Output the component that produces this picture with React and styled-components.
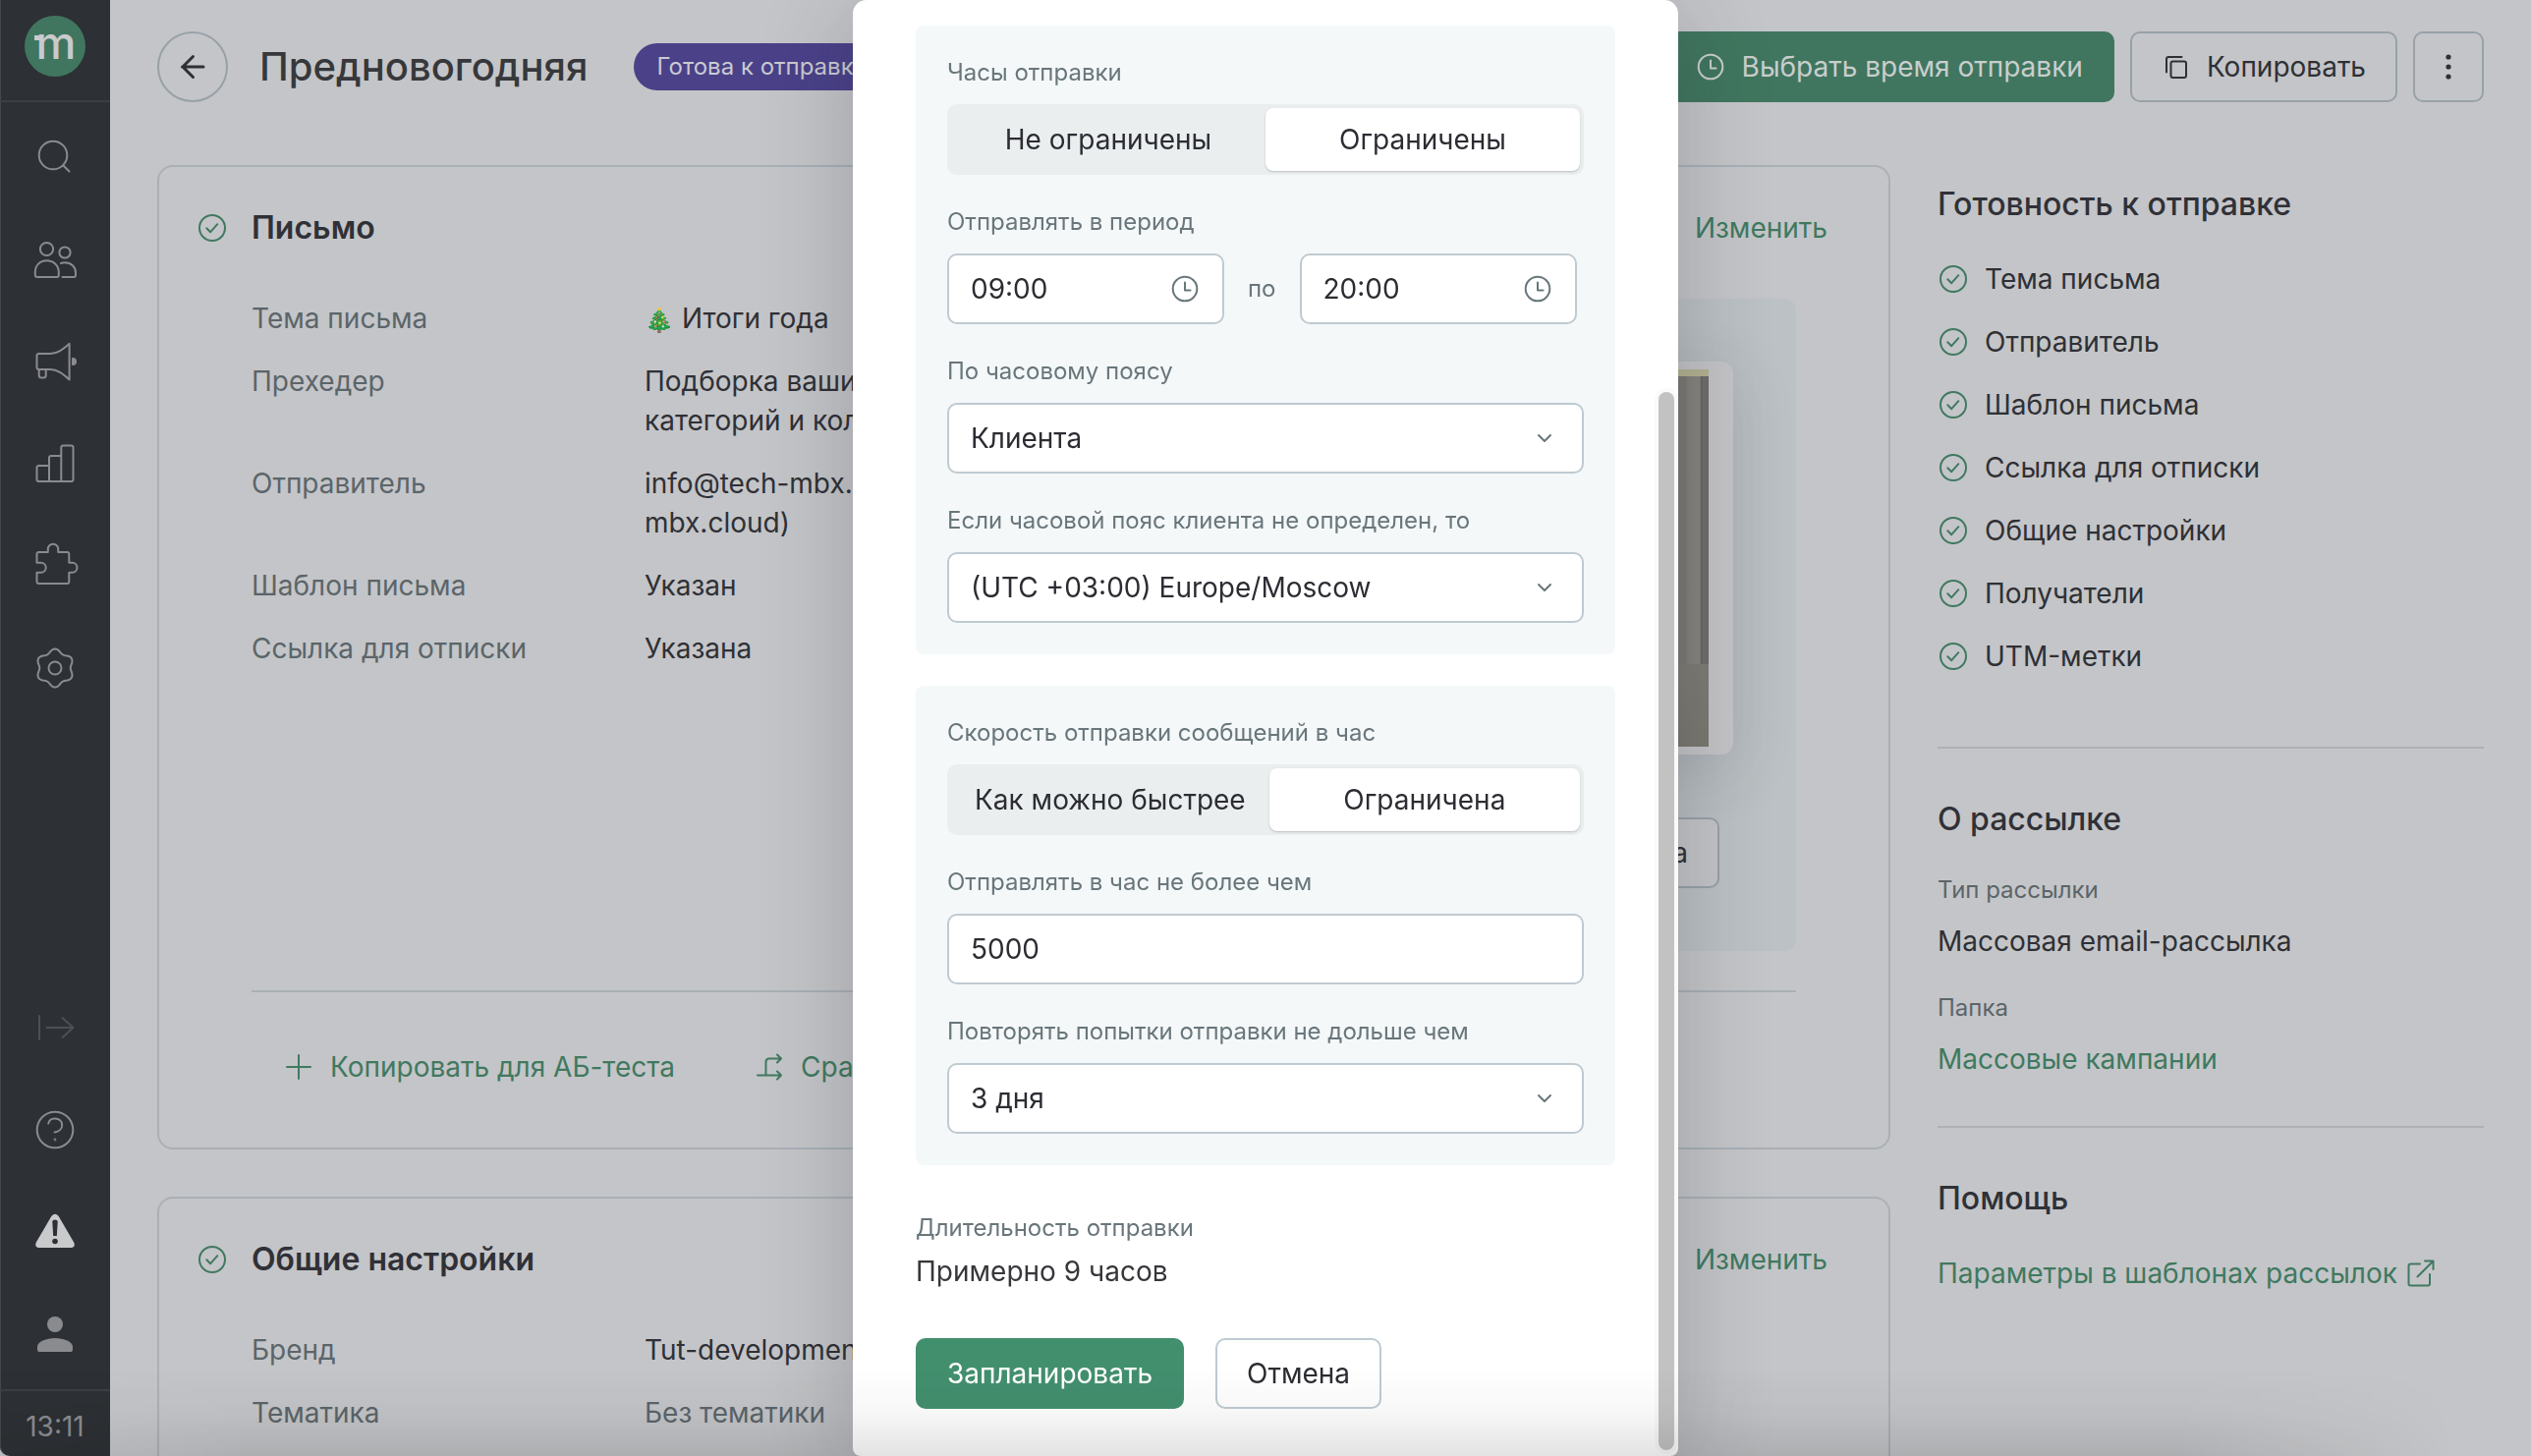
import React, { useState } from "react";
import styled, { createGlobalStyle } from "styled-components";

const c = {
  page: "#c4c5c8",
  ink: "#2f3035",
  muted: "#5b656a",
  green: "#407960",
  greenFill: "#40765f",
  line: "#a9b0b6",
  lineSoft: "#adb0b4",
  lineStrong: "#98a1a8",
  side: "#2d3034",
  sideIcon: "#8a8b8f",
  badge: "#4a4189",
  modalInk: "#2c2d33",
  modalMuted: "#69767b",
  modalLine: "#bfcad1",
  modalGreen: "#428f6e",
  panel: "#f4f8f9",
};

const GlobalStyle = createGlobalStyle`
  *, *::before, *::after { box-sizing: border-box; }
  body {
    margin: 0;
    background: ${c.page};
    color: ${c.ink};
    font-family: Inter, "Noto Sans", "Liberation Sans", sans-serif;
    font-size: 28px;
    line-height: 40px;
  }
  button, input, select { font: inherit; color: inherit; }
  button { cursor: pointer; }
  h1, h2, p, dl, dd, dt, ul { margin: 0; padding: 0; }
  a { text-decoration: none; }
`;

/* ---------- icons ---------- */

const Svg = styled.svg`
  display: block;
  flex: none;
  fill: ${(p) => (p.$solid ? "currentColor" : "none")};
  stroke: ${(p) => (p.$solid ? "none" : "currentColor")};
  stroke-width: ${(p) => p.$weight || 2};
  stroke-linecap: round;
  stroke-linejoin: round;
`;

const Icon = ({ size = 48, solid, weight, children }) => (
  <Svg width={size} height={size} viewBox={`0 0 ${size} ${size}`} aria-hidden="true" $solid={solid} $weight={weight}>
    {children}
  </Svg>
);

const gearPath = Array.from({ length: 72 }, (_, i) => {
  const a = (i / 72) * Math.PI * 2;
  const r = 17.6 + 1.9 * Math.cos(6 * a);
  const x = (24 + r * Math.sin(a)).toFixed(2);
  const y = (24 - r * Math.cos(a)).toFixed(2);
  return `${i ? "L" : "M"}${x} ${y}`;
}).join("") + "Z";

const SearchIcon = () => (
  <Icon><circle cx="22" cy="22" r="14.3" /><path d="M32.5 32.5 38.5 38.5" /></Icon>
);
const UsersIcon = () => (
  <Icon>
    <circle cx="15.5" cy="13.5" r="6.6" />
    <circle cx="34" cy="17" r="5.6" />
    <path d="M15.5 25.3C8.5 25.3 3.8 30.4 3.8 37v3q0 2 2 2h20q2 0 2-2v-3c0-6.600-5-11.700-12.300-11.700Z" />
    <path d="M30 28c1.300-.6 2.600-.8 4-.8 6.500 0 11 4.500 11 10.300V40q0 2-2 2H31.500" />
  </Icon>
);
const MegaphoneIcon = () => (
  <Icon>
    <path d="M7.500 16H19c8 0 14-5.500 19.600-10.200v36.600C33 37.500 27 32 19 32H7.500q-2 0-2-2V18q0-2 2-2Z" />
    <path d="M7.700 32v6q0 2.600 2.600 2.600h1.800q2.600 0 2.600-2.600v-6" />
    <path d="M42 21a3 3 0 0 1 0 6Z" fill="currentColor" />
  </Icon>
);
const ChartIcon = () => (
  <Icon>
    <path d="M18 42H7.500q-2 0-2-2V28q0-2 2-2H18M18 42V18q0-2 2-2h10.300M18 42h12.300M30.300 42V7.600q0-2 2-2h8.200q2 0 2 2V40q0 2-2 2H30.300" />
  </Icon>
);
const PuzzleIcon = () => (
  <Icon>
    <path d="M7.500 10h9.300V6.900a5.200 5.200 0 0 1 10.400 0V10h9.100q2 0 2 2v8.800h3.200a5 5 0 0 1 0 10h-3.200V40q0 2-2 2H7.500q-2 0-2-2v-9.200h4.200a5 5 0 0 0 0-10H5.500V12q0-2 2-2Z" />
  </Icon>
);
const GearIcon = () => (
  <Icon><path d={gearPath} /><circle cx="24" cy="24" r="6.500" /></Icon>
);
const ExpandIcon = () => (
  <Icon><path d="M8 12v24M15.500 24h27M31.500 14l11 10-11 10" /></Icon>
);
const HelpIcon = () => (
  <Icon>
    <circle cx="24" cy="24" r="18.300" />
    <path d="M17.200 17.600c.6-3.200 3.300-5.200 6.700-5.200 4.200 0 7.300 2.700 7.300 6.500 0 4-3.400 7-7.600 7.700" />
    <circle cx="24" cy="34" r=".4" />
  </Icon>
);
const AlertIcon = () => (
  <Icon solid>
    <path fill="#c9cacc" d="M20.300 8.100Q24 3.200 27.700 8.100L43.300 34.800Q45 39.500 40.500 40h-33Q3 39.500 4.700 34.800Z" />
    <path fill={c.side} d="M21.300 13.500q0-2 2.700-2t2.700 2L25.800 28h-3.600Z" />
    <circle fill={c.side} cx="24" cy="33.500" r="2.800" />
  </Icon>
);
const PersonIcon = () => (
  <Icon solid>
    <circle cx="24" cy="14" r="8" />
    <path d="M6 37c0-5.500 9-9 18-9s18 3.500 18 9v3q0 2-2 2H8q-2 0-2-2Z" />
  </Icon>
);
const BackIcon = () => (
  <Icon weight={3}><path d="M13.500 24H35M24.500 13.500 14 24l10.500 10.500" /></Icon>
);
const CheckIcon = () => (
  <Icon size={28}><circle cx="14" cy="14" r="13" /><path d="M8.300 14.300 12.200 18.200 19.300 10.200" /></Icon>
);
const ClockIcon = () => (
  <Icon size={28}><circle cx="14" cy="14" r="12.300" /><path d="M14 7.500V15.500H19.500" /></Icon>
);
const CopyIcon = () => (
  <Icon size={28}>
    <path d="M5 19.500V6q0-2 2-2H20.500" />
    <rect x="9.500" y="8.500" width="15.500" height="16.500" rx="2" />
  </Icon>
);
const DotsIcon = () => (
  <Icon size={28} solid>
    <circle cx="14" cy="4" r="2.600" />
    <circle cx="14" cy="14" r="2.600" />
    <circle cx="14" cy="24" r="2.600" />
  </Icon>
);
const PlusIcon = () => (
  <Icon size={32}><path d="M4 16H28M16 4V28" /></Icon>
);
const CompareIcon = () => (
  <Icon size={32}>
    <path d="M4 24.500H28M12.500 24.500V11q0-3.500 3.500-3.500H28M24 3.500l4 4-4 4M24 20.500l4 4-4 4" />
  </Icon>
);
const ExternalIcon = () => (
  <Icon size={28}>
    <path d="M13 4.500H3.500q-2 0-2 2V24.500q0 2 2 2h17.500q2 0 2-2V15M10.500 17.500 26 2M18 1.500h8.500V10" />
  </Icon>
);
const ChevronIcon = () => (
  <Icon size={16}><path d="M2 5l6 6 6-6" /></Icon>
);
const Logo = () => (
  <svg width="62" height="62" viewBox="0 0 62 62" role="img" aria-label="m">
    <circle cx="31" cy="31" r="31" fill={c.greenFill} />
    <rect x="10" y="20" width="6" height="5" fill="#c9cacc" />
    <text x="32" y="44" textAnchor="middle" fontFamily="Inter, sans-serif" fontSize="46" fontWeight="500" fill="#c9cacc">m</text>
  </svg>
);

/* ---------- page frame ---------- */

const Shell = styled.div`
  display: flex;
  height: 100vh;
  overflow: hidden;
`;

const Sidebar = styled.nav`
  flex: none;
  width: 112px;
  display: flex;
  flex-direction: column;
  background: ${c.side};
  color: ${c.sideIcon};
  border-bottom-left-radius: 10px;
  box-shadow: inset 1px 0 0 #44484b;
`;

const LogoCell = styled.div`
  height: 104px;
  padding-top: 16px;
  display: flex;
  justify-content: center;
  align-items: flex-start;
  border-bottom: 2px solid #3b3e43;
`;

const NavGroup = styled.div`
  display: flex;
  flex-direction: column;
  padding: 4px 0;
  margin-top: ${(p) => (p.$end ? "auto" : "0")};
`;

const NavButton = styled.button`
  height: 104px;
  padding: 0;
  display: grid;
  place-items: center;
  border: 0;
  background: none;
  color: ${(p) => (p.$dim ? "#4d5053" : c.sideIcon)};
`;

const Clock = styled.time`
  height: 68px;
  padding-top: 6px;
  display: flex;
  align-items: center;
  justify-content: center;
  border-top: 2px solid #3b3e43;
`;

const Page = styled.main`
  flex: 1;
  min-width: 0;
  padding: 32px 48px 0;
`;

const Header = styled.header`
  display: flex;
  align-items: center;
  height: 72px;
  margin-bottom: 64px;
`;

const BackButton = styled.button`
  width: 72px;
  height: 72px;
  padding: 0;
  display: grid;
  place-items: center;
  border: 2px solid ${c.lineStrong};
  border-radius: 50%;
  background: none;
`;

const Title = styled.h1`
  margin: 0 46px 0 32px;
  font-size: 40px;
  line-height: 48px;
  font-weight: 500;
  color: #37383b;
`;

const Badge = styled.span`
  height: 48px;
  padding: 0 24px;
  border-radius: 24px;
  background: ${c.badge};
  color: #cacad0;
  font-size: 24px;
  line-height: 48px;
  white-space: nowrap;
`;

const Actions = styled.div`
  display: flex;
  gap: 16px;
  margin-left: auto;
`;

const Button = styled.button`
  display: inline-flex;
  align-items: center;
  justify-content: center;
  gap: ${(p) => (p.$plain ? "16px" : "18px")};
  height: 72px;
  min-width: 72px;
  padding: 0 ${(p) => (p.$square ? "0" : "30px")};
  border: 2px solid ${(p) => (p.$fill || (p.$plain ? "transparent" : p.$line || c.lineStrong))};
  border-radius: 10px;
  background: ${(p) => p.$fill || p.$back || "none"};
  color: ${(p) => p.$ink || c.ink};
  white-space: nowrap;
`;

const Columns = styled.div`
  display: grid;
  grid-template-columns: minmax(0, 1fr) 556px;
  gap: 48px;
  align-items: start;
`;

const Stack = styled.div`
  display: flex;
  flex-direction: column;
  gap: 48px;
`;

/* ---------- cards ---------- */

const Card = styled.section`
  border: 2px solid ${c.line};
  border-radius: 16px;
  padding: 42px 62px 46px 40px;
`;

const CardHead = styled.div`
  display: flex;
  align-items: center;
  gap: 26px;
  margin-bottom: 52px;
  color: ${c.green};
`;

const Heading = styled.h2`
  font-size: 32px;
  line-height: 40px;
  font-weight: ${(p) => (p.$bold ? 600 : 500)};
  color: #303137;
`;

const Link = styled.a`
  display: inline-flex;
  align-items: center;
  gap: 10px;
  margin-left: ${(p) => (p.$end ? "auto" : "0")};
  color: ${c.green};
`;

const CardBody = styled.div`
  padding: 0 32px 0 54px;
`;

const LetterGrid = styled.div`
  display: flex;
  justify-content: space-between;
  padding-bottom: 40px;
  border-bottom: 2px solid ${c.line};
`;

const Facts = styled.dl`
  display: grid;
  grid-template-columns: 400px minmax(0, 480px);
  align-content: start;
  row-gap: 24px;
`;

const Term = styled.dt`
  color: ${c.muted};
`;

const Value = styled.dd`
  color: ${(p) => (p.$muted ? c.muted : c.ink)};
`;

const Emoji = styled.span`
  font-size: 24px;
  line-height: 24px;
  opacity: 0.85;
`;

const Preview = styled.div`
  display: flex;
  flex-direction: column;
  width: 520px;
  padding: 64px;
  border-radius: 12px;
  background: #bbc1c4;
`;

const Sheet = styled.div`
  height: 400px;
  padding: 8px 25px;
  margin-bottom: 64px;
  border-radius: 12px;
  background: #c4c4c7;
  box-shadow: 0 16px 64px rgba(60, 64, 80, 0.16);
`;

const Photo = styled.div`
  height: 100%;
  border-top: 7px solid #b4b291;
  background:
    linear-gradient(#7e7c76, #7a7870) bottom / 100% 84px no-repeat,
    linear-gradient(to left, #6d6b67 0, #716f6b 6px, #5f5d59 7px, #878581 9px, #83817c 21px, #7a7973 23px, #7e7d76 100%);
`;

const PreviewAction = styled.div`
  display: flex;
  justify-content: flex-end;
  padding-right: 14px;
`;

const CardActions = styled.div`
  display: flex;
  gap: 16px;
  padding-top: 40px;
`;

/* ---------- side column ---------- */

const Aside = styled.aside`
  padding-top: 20px;
`;

const AsideBlock = styled.section`
  padding-bottom: ${(p) => p.$bottom || "48px"};
  margin-bottom: 52px;
  border-bottom: ${(p) => (p.$last ? "0" : `2px solid ${c.lineSoft}`)};

  ${Heading} { margin-bottom: 36px; }
`;

const CheckList = styled.ul`
  display: flex;
  flex-direction: column;
  gap: 24px;
  list-style: none;
`;

const CheckItem = styled.li`
  display: flex;
  align-items: center;
  gap: 18px;
  padding-left: 2px;

  svg { color: ${c.green}; }
`;

const Meta = styled.dl`
  dt { margin-bottom: 16px; font-size: 24px; line-height: 32px; color: ${c.muted}; }
  dd + dt { margin-top: 32px; }
`;

/* ---------- dialog ---------- */

const Overlay = styled.div`
  position: fixed;
  inset: 0;
  display: flex;
  justify-content: center;
`;

const Dialog = styled.form`
  position: relative;
  width: 840px;
  height: 100vh;
  padding: 26px 64px 48px;
  display: flex;
  flex-direction: column;
  border-radius: 14px 14px 8px 8px;
  background: #fff;
  color: ${c.modalInk};
  box-shadow: 0 16px 96px rgba(30, 32, 40, 0.24);
`;

const ScrollBar = styled.div`
  position: absolute;
  top: 395px;
  right: 0;
  bottom: 2px;
  width: 24px;
  padding: 4px;
  border-radius: 12px;
  background: #fafafa;

  &::before {
    content: "";
    display: block;
    width: 16px;
    height: 100%;
    border-radius: 8px;
    background: #c2c2c2;
  }
`;

const Panel = styled.div`
  display: flex;
  flex-direction: column;
  gap: 32px;
  padding: 32px;
  margin-bottom: ${(p) => (p.$last ? "48px" : "32px")};
  border-radius: 8px;
  background: ${c.panel};
`;

const Field = styled.div`
  min-width: 0;
`;

const Label = styled.label`
  display: block;
  margin-bottom: ${(p) => (p.$tight ? "8px" : "16px")};
  font-size: 24px;
  line-height: 32px;
  color: ${c.modalMuted};
`;

const Segments = styled.div`
  display: flex;
  height: 72px;
  padding: 4px;
  border-radius: 10px;
  background: #ebeeef;
`;

const Segment = styled.label`
  flex: 1 1 0;
  display: flex;
  align-items: center;
  justify-content: center;
  padding: 0 24px;
  border-radius: 8px;
  white-space: nowrap;
  cursor: pointer;

  &:has(input:checked) {
    background: #fff;
    box-shadow: 0 1px 2px rgba(40, 50, 60, 0.25);
  }
`;

const HiddenRadio = styled.input`
  position: absolute;
  opacity: 0;
  width: 1px;
  height: 1px;
  margin: 0;
`;

const Box = styled.div`
  position: relative;
  display: flex;
  align-items: center;
  width: ${(p) => (p.$short ? "282px" : "100%")};
  height: 72px;
  border: 2px solid ${c.modalLine};
  border-radius: 10px;
  background: #fff;

  > svg {
    position: absolute;
    right: ${(p) => (p.$short ? "24px" : "30px")};
    color: ${c.modalMuted};
    pointer-events: none;
  }
`;

const Input = styled.input`
  width: 100%;
  height: 100%;
  padding: 0 22px;
  border: 0;
  outline: 0;
  background: none;
`;

const Select = styled.select`
  width: 100%;
  height: 100%;
  padding: 0 22px;
  border: 0;
  outline: 0;
  appearance: none;
  background: none;
`;

const Period = styled.div`
  display: flex;
  align-items: center;
  gap: 24px;
  font-size: 24px;
  color: ${c.modalMuted};

  input { font-size: 28px; color: ${c.modalInk}; }
`;

const Duration = styled.output`
  display: block;
  margin-bottom: 48px;
  color: #36373a;
`;

const DialogActions = styled.div`
  display: flex;
  gap: 32px;
`;

const BottomShade = styled.div`
  position: fixed;
  inset: auto 0 0 0;
  height: 90px;
  pointer-events: none;
  background: linear-gradient(transparent, rgba(0, 0, 0, 0.03) 50%, rgba(0, 0, 0, 0.11));
  mask-image: linear-gradient(to right, rgba(0, 0, 0, 0.5), #000 10%, #000 86%, transparent 97%);
`;

/* ---------- pieces ---------- */

const SegmentedField = ({ title, name, options, value, onChange }) => (
  <Field role="radiogroup" aria-labelledby={`${name}-label`}>
    <Label as="span" id={`${name}-label`}>{title}</Label>
    <Segments>
      {options.map((option) => (
        <Segment key={option}>
          <HiddenRadio type="radio" name={name} checked={value === option} onChange={() => onChange(option)} />
          {option}
        </Segment>
      ))}
    </Segments>
  </Field>
);

const SelectField = ({ title, id, options }) => (
  <Field>
    <Label htmlFor={id}>{title}</Label>
    <Box>
      <Select id={id}>{options.map((o) => <option key={o}>{o}</option>)}</Select>
      <ChevronIcon />
    </Box>
  </Field>
);

const readiness = [
  "Тема письма", "Отправитель", "Шаблон письма", "Ссылка для отписки",
  "Общие настройки", "Получатели", "UTM-метки",
];

const letter = [
  ["Тема письма", <><Emoji>🎄</Emoji> Итоги года</>],
  ["Прехедер", "Подборка ваших самых любимых категорий и коллекций"],
  ["Отправитель", "info@tech-mbx.cloud (info@tech-mbx.cloud)"],
  ["Шаблон письма", "Указан"],
  ["Ссылка для отписки", "Указана"],
];

const topNav = [
  ["Поиск", SearchIcon], ["Клиенты", UsersIcon], ["Кампании", MegaphoneIcon],
  ["Отчёты", ChartIcon], ["Интеграции", PuzzleIcon], ["Настройки", GearIcon],
];

const bottomNav = [
  ["Развернуть", ExpandIcon, true], ["Справка", HelpIcon], ["Предупреждения", AlertIcon], ["Профиль", PersonIcon],
];

const NavItems = ({ items }) =>
  items.map(([name, Glyph, dim]) => (
    <NavButton key={name} type="button" aria-label={name} $dim={dim}><Glyph /></NavButton>
  ));

const CardTitle = ({ children }) => (
  <CardHead>
    <CheckIcon />
    <Heading $bold>{children}</Heading>
    <Link href="#edit" $end>Изменить</Link>
  </CardHead>
);

const ScheduleDialog = () => {
  const [hours, setHours] = useState("Ограничены");
  const [speed, setSpeed] = useState("Ограничена");
  return (
    <Overlay>
      <Dialog role="dialog" aria-label="Время отправки" onSubmit={(e) => e.preventDefault()}>
        <Panel>
          <SegmentedField title="Часы отправки" name="hours" options={["Не ограничены", "Ограничены"]} value={hours} onChange={setHours} />
          <Field>
            <Label htmlFor="from">Отправлять в период</Label>
            <Period>
              <Box $short><Input id="from" defaultValue="09:00" /><ClockIcon /></Box>
              <label htmlFor="to">по</label>
              <Box $short><Input id="to" defaultValue="20:00" /><ClockIcon /></Box>
            </Period>
          </Field>
          <SelectField title="По часовому поясу" id="zone" options={["Клиента"]} />
          <SelectField title="Если часовой пояс клиента не определен, то" id="fallback" options={["(UTC +03:00) Europe/Moscow"]} />
        </Panel>
        <Panel $last>
          <SegmentedField title="Скорость отправки сообщений в час" name="speed" options={["Как можно быстрее", "Ограничена"]} value={speed} onChange={setSpeed} />
          <Field>
            <Label htmlFor="limit">Отправлять в час не более чем</Label>
            <Box><Input id="limit" defaultValue="5000" /></Box>
          </Field>
          <SelectField title="Повторять попытки отправки не дольше чем" id="retry" options={["3 дня"]} />
        </Panel>
        <Label htmlFor="duration" $tight>Длительность отправки</Label>
        <Duration id="duration">Примерно 9 часов</Duration>
        <DialogActions>
          <Button type="submit" $fill={c.modalGreen} $ink="#fff">Запланировать</Button>
          <Button type="button" $line={c.modalLine} $back="#fff" $ink={c.modalInk}>Отмена</Button>
        </DialogActions>
        <ScrollBar />
      </Dialog>
    </Overlay>
  );
};

export default function App() {
  return (
    <>
      <GlobalStyle />
      <Shell>
        <Sidebar>
          <LogoCell><Logo /></LogoCell>
          <NavGroup><NavItems items={topNav} /></NavGroup>
          <NavGroup $end><NavItems items={bottomNav} /></NavGroup>
          <Clock>13:11</Clock>
        </Sidebar>
        <Page>
          <Header>
            <BackButton type="button" aria-label="Назад"><BackIcon /></BackButton>
            <Title>Предновогодняя</Title>
            <Badge>Готова к отправке</Badge>
            <Actions>
              <Button type="button" $fill={c.greenFill} $ink="#c9cecd"><ClockIcon />Выбрать время отправки</Button>
              <Button type="button"><CopyIcon />Копировать</Button>
              <Button type="button" $square aria-label="Ещё"><DotsIcon /></Button>
            </Actions>
          </Header>
          <Columns>
            <Stack>
              <Card>
                <CardTitle>Письмо</CardTitle>
                <CardBody>
                  <LetterGrid>
                    <Facts>
                      {letter.map(([term, value]) => (
                        <React.Fragment key={term}>
                          <Term>{term}</Term>
                          <Value>{value}</Value>
                        </React.Fragment>
                      ))}
                    </Facts>
                    <Preview>
                      <Sheet><Photo /></Sheet>
                      <PreviewAction>
                        <Button type="button" $back={c.page}>Просмотр письма</Button>
                      </PreviewAction>
                    </Preview>
                  </LetterGrid>
                  <CardActions>
                    <Button type="button" $plain $ink={c.green}><PlusIcon />Копировать для АБ-теста</Button>
                    <Button type="button" $plain $ink={c.green}><CompareIcon />Сравнить</Button>
                  </CardActions>
                </CardBody>
              </Card>
              <Card>
                <CardTitle>Общие настройки</CardTitle>
                <CardBody>
                  <Facts>
                    <Term>Бренд</Term>
                    <Value>Tut-development</Value>
                    <Term>Тематика</Term>
                    <Value $muted>Без тематики</Value>
                  </Facts>
                </CardBody>
              </Card>
            </Stack>
            <Aside>
              <AsideBlock $bottom="72px">
                <Heading>Готовность к отправке</Heading>
                <CheckList>
                  {readiness.map((item) => <CheckItem key={item}><CheckIcon />{item}</CheckItem>)}
                </CheckList>
              </AsideBlock>
              <AsideBlock>
                <Heading>О рассылке</Heading>
                <Meta>
                  <dt>Тип рассылки</dt>
                  <dd>Массовая email-рассылка</dd>
                  <dt>Папка</dt>
                  <dd><Link href="#folder">Массовые кампании</Link></dd>
                </Meta>
              </AsideBlock>
              <AsideBlock $last>
                <Heading>Помощь</Heading>
                <Link href="#help">Параметры в шаблонах рассылок<ExternalIcon /></Link>
              </AsideBlock>
            </Aside>
          </Columns>
        </Page>
      </Shell>
      <ScheduleDialog />
      <BottomShade />
    </>
  );
}
